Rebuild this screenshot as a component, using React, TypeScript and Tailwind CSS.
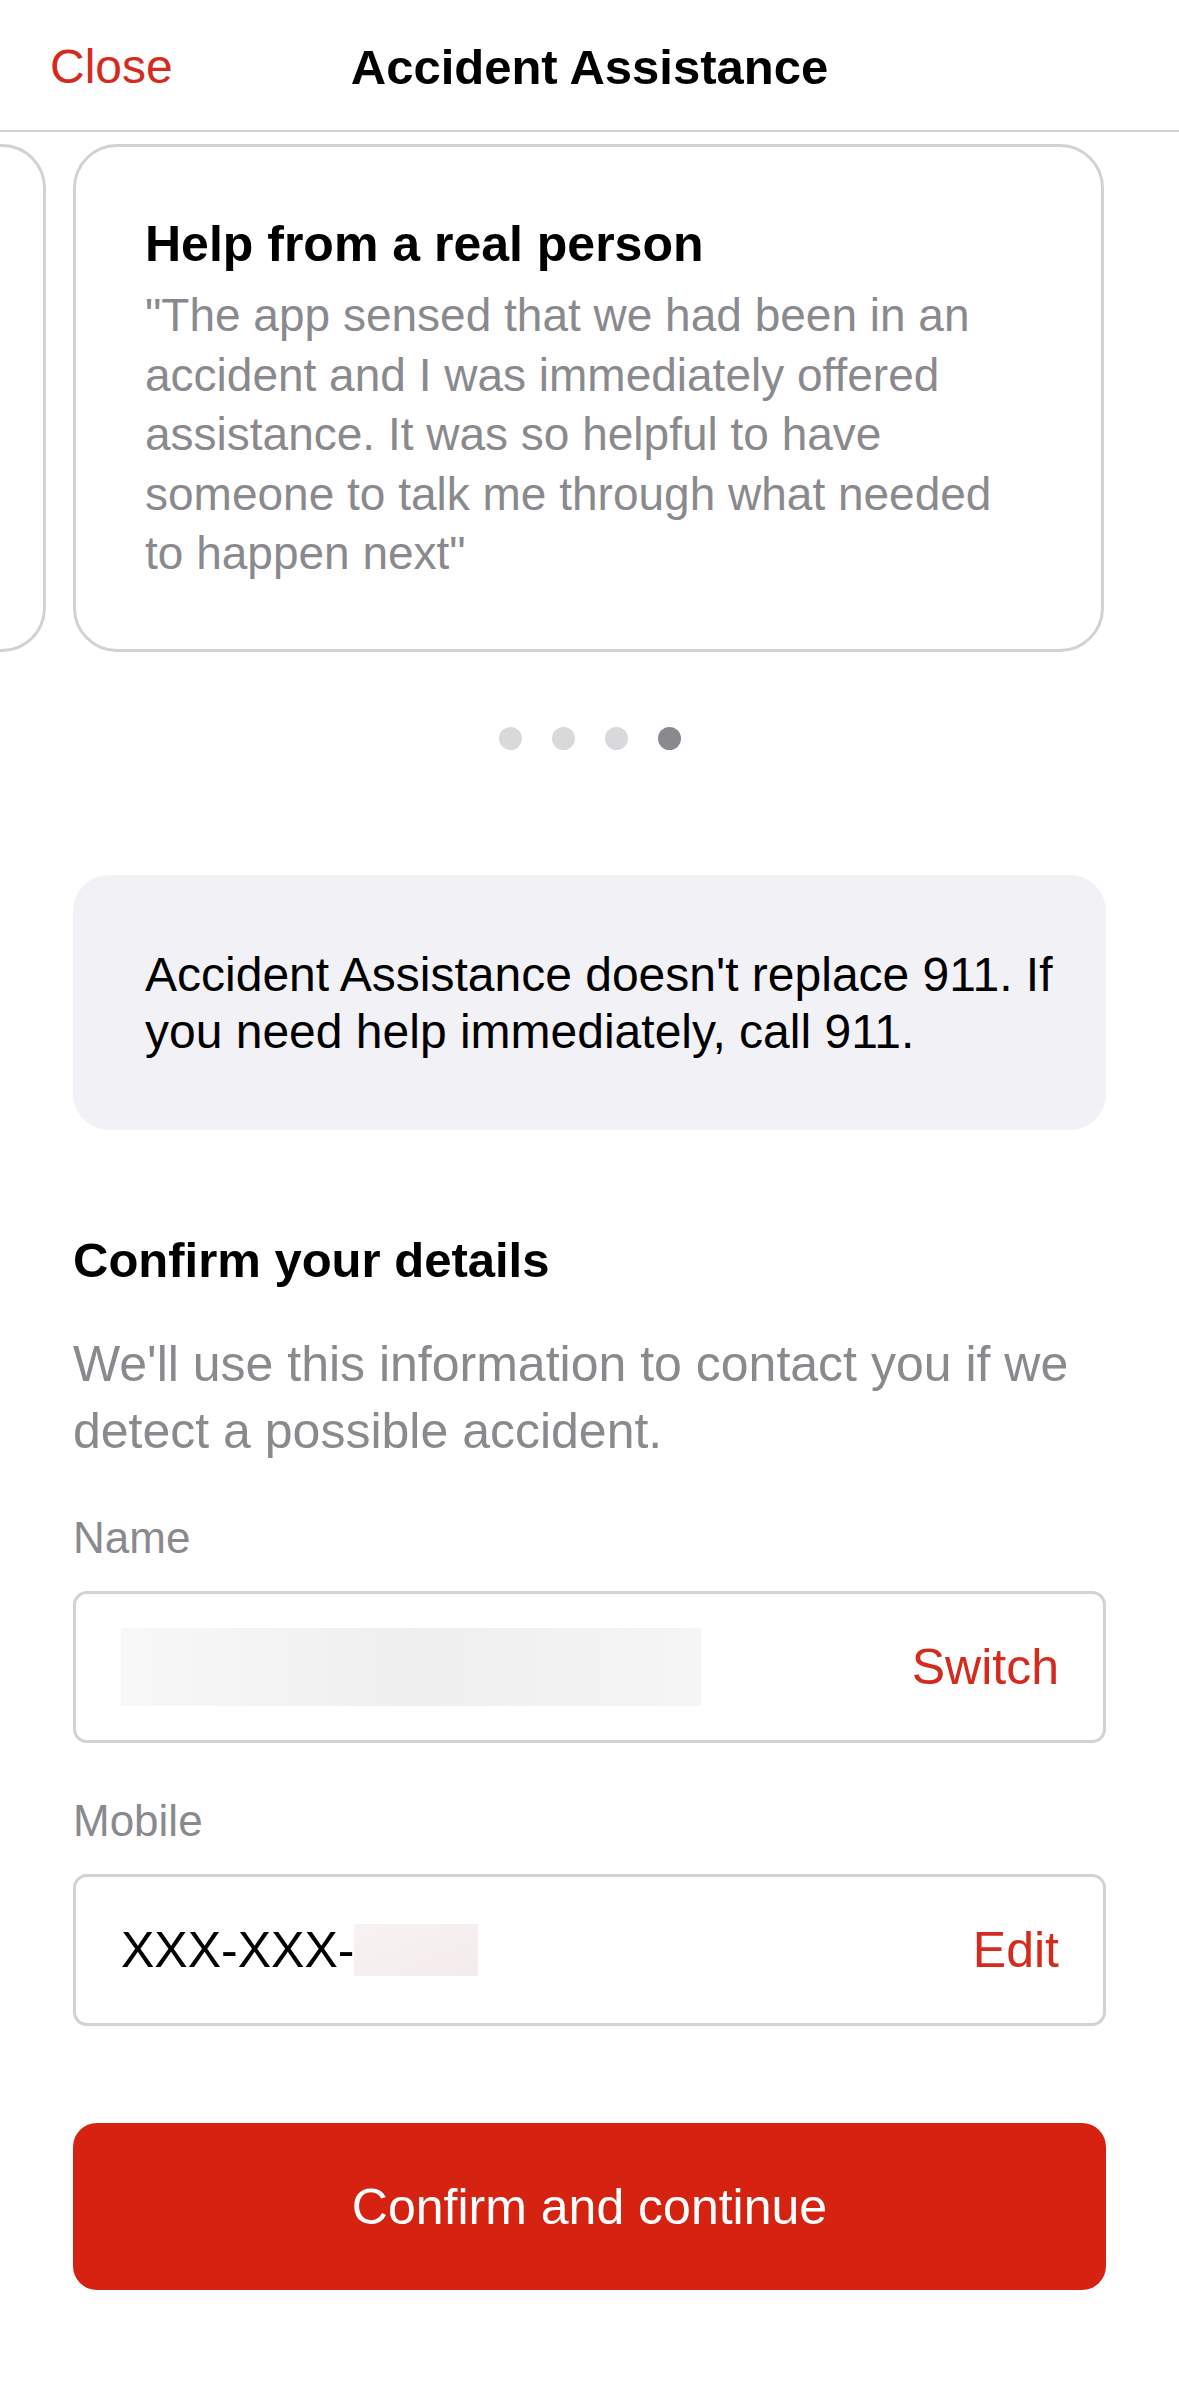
import React from "react";

const font = { fontFamily: '"Liberation Sans", Arial, sans-serif' };

function Header() {
  return (
    <header className="grid h-[132px] grid-cols-[1fr_auto_1fr] items-center border-b-2 border-[#d1d1d6] bg-white pt-[4px]">
      <button className="justify-self-start pl-[50px] text-[48px] leading-none text-[#d52b1e]">
        Close
      </button>
      <h1 className="text-[49px] font-bold leading-none text-black">
        Accident Assistance
      </h1>
      <div />
    </header>
  );
}

function Carousel() {
  return (
    <div className="mt-[12px] flex gap-[27px] overflow-hidden">
      <div className="h-[508px] w-[46px] shrink-0 rounded-r-[44px] border-y-[3px] border-r-[3px] border-[#d1d1d6]" />
      <div className="h-[508px] w-[1031px] shrink-0 rounded-[44px] border-[3px] border-[#d1d1d6] pl-[69px] pr-[66px] pt-[67px]">
        <h2 className="text-[50px] font-bold leading-[60px] text-black">
          Help from a real person
        </h2>
        <p className="mt-[12px] text-[46px] leading-[59.5px] text-[#8a8a8e]">
          "The app sensed that we had been in an accident and I was
          immediately offered assistance. It was so helpful to have someone
          to talk me through what needed to happen next"
        </p>
      </div>
    </div>
  );
}

function Dots() {
  const active = 3;
  return (
    <div className="mt-[75px] flex justify-center gap-[30px] pl-[1px]">
      {[0, 1, 2, 3].map((i) => (
        <span
          key={i}
          className={`h-[23px] w-[23px] rounded-full ${i === active ? "bg-[#8a8a8e]" : "bg-[#d9d9dc]"}`}
        />
      ))}
    </div>
  );
}

function Field({
  label,
  action,
  children,
  labelGap,
}: {
  label: string;
  action: string;
  children: React.ReactNode;
  labelGap: string;
}) {
  return (
    <div className={labelGap}>
      <div className="text-[44px] leading-[54px] text-[#8a8a8e]">{label}</div>
      <div className="mt-[26px] flex h-[152px] items-center justify-between rounded-[14px] border-[3px] border-[#d1d1d6] pl-[45px] pr-[44px]">
        <div className="flex items-center">{children}</div>
        <span className="text-[50px] leading-none text-[#d52b1e]">{action}</span>
      </div>
    </div>
  );
}

export default function App() {
  return (
    <div className="min-h-[2396px] w-[1179px] bg-white" style={font}>
      <Header />
      <Carousel />
      <Dots />

      <div className="px-[73px]">
        <div className="mt-[125px] flex h-[255px] items-center rounded-[36px] bg-[#f1f1f6] pl-[72px] pr-[36px]">
          <p className="text-[48px] leading-[57px] text-black">
            Accident Assistance doesn't replace 911. If you need help
            immediately, call 911.
          </p>
        </div>

        <h2 className="mt-[100px] text-[49px] font-bold leading-[60px] text-black">
          Confirm your details
        </h2>
        <p className="mt-[41px] text-[50px] leading-[67px] text-[#8a8a8e]">
          We'll use this information to contact you if we detect a possible
          accident.
        </p>

        <Field label="Name" action="Switch" labelGap="mt-[46px]">
          <div className="h-[78px] w-[580px] bg-gradient-to-r from-[#f8f8f8] via-[#efefef] to-[#f5f5f5]" />
        </Field>

        <Field label="Mobile" action="Edit" labelGap="mt-[51px]">
          <span className="text-[50px] leading-none text-black">XXX-XXX-</span>
          <div className="h-[52px] w-[124px] bg-gradient-to-br from-[#f9f2f2] to-[#f4ecec]" />
        </Field>

        <button className="mt-[97px] flex h-[167px] w-full items-center justify-center rounded-[24px] bg-[#d62311] text-[50px] leading-none text-white">
          Confirm and continue
        </button>
      </div>
    </div>
  );
}
